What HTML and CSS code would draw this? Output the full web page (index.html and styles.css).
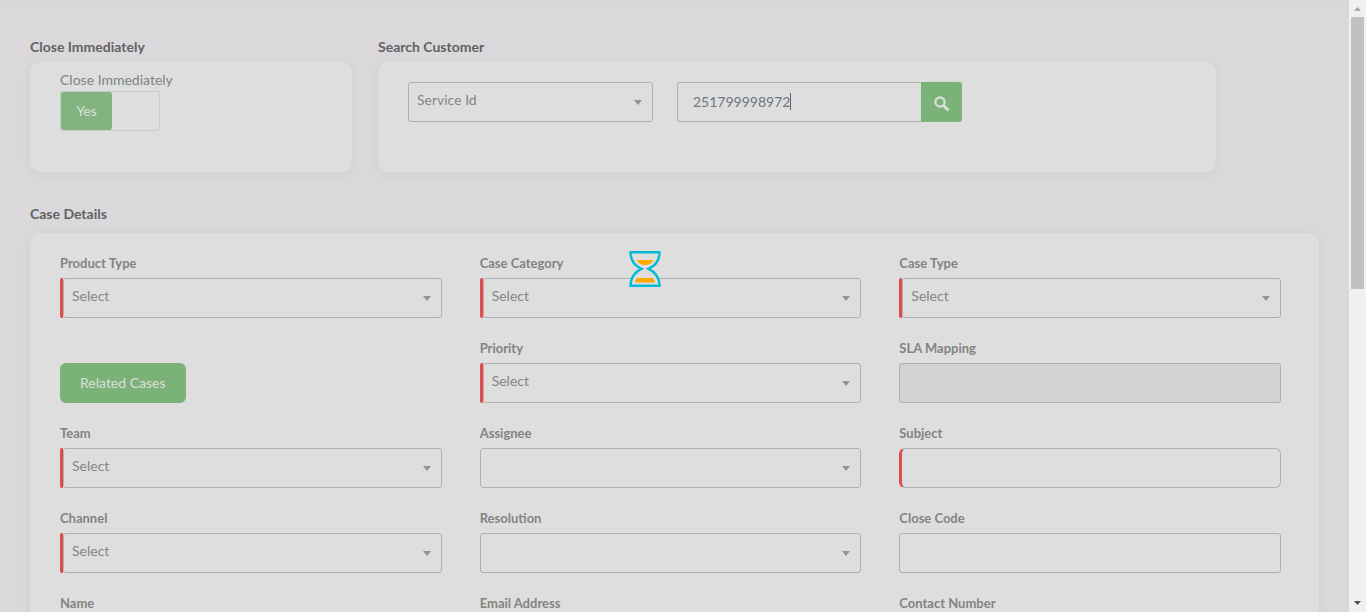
FILE: index.html
```html
<!DOCTYPE html>
<html lang="en">
<head>
<meta charset="utf-8">
<title>Case Details</title>
<link rel="stylesheet" href="styles.css">
</head>
<body>
<div class="shell">
  <main class="page">
    <form class="content">
      <div class="top">
        <section class="block">
          <h2 class="heading">Close Immediately</h2>
          <div class="card card-toggle">
            <span class="toggle-label" id="close-label">Close Immediately</span>
            <button type="button" class="toggle" role="switch" aria-checked="true" aria-labelledby="close-label"><span class="toggle-on">Yes</span></button>
          </div>
        </section>
        <section class="block">
          <h2 class="heading">Search Customer</h2>
          <div class="card card-search">
            <div class="picker">
              <select class="control" aria-label="Search by"><option>Service Id</option></select>
            </div>
            <div class="search">
              <input class="control search-input" type="text" value="251799998972" aria-label="Service Id">
              <span class="caret"></span>
              <button type="button" class="search-button" aria-label="Search">
                <svg width="16" height="16" viewBox="0 0 16 16" fill="none" stroke="currentColor"><circle cx="6" cy="6" r="4.6" stroke-width="2.2"/><path d="M9.500 9.500 14.500 14.500" stroke-width="2.800"/></svg>
              </button>
            </div>
          </div>
        </section>
      </div>
      <section class="block block-details">
        <h2 class="heading">Case Details</h2>
        <div class="card card-details">
          <div class="field"><label for="product">Product Type</label><div class="picker required"><select id="product" class="control"><option>Select</option></select></div></div>
          <div class="field"><label for="category">Case Category</label><div class="picker required"><select id="category" class="control"><option>Select</option></select></div></div>
          <div class="field"><label for="type">Case Type</label><div class="picker required"><select id="type" class="control"><option>Select</option></select></div></div>

          <div class="field field-action"><button type="button" class="related">Related Cases</button></div>
          <div class="field"><label for="priority">Priority</label><div class="picker required"><select id="priority" class="control"><option>Select</option></select></div></div>
          <div class="field"><label for="sla">SLA Mapping</label><input id="sla" class="control" type="text" disabled></div>

          <div class="field"><label for="team">Team</label><div class="picker required"><select id="team" class="control"><option>Select</option></select></div></div>
          <div class="field"><label for="assignee">Assignee</label><div class="picker"><select id="assignee" class="control"><option></option></select></div></div>
          <div class="field"><label for="subject">Subject</label><input id="subject" class="control input-required" type="text"></div>

          <div class="field"><label for="channel">Channel</label><div class="picker required"><select id="channel" class="control"><option>Select</option></select></div></div>
          <div class="field"><label for="resolution">Resolution</label><div class="picker"><select id="resolution" class="control"><option></option></select></div></div>
          <div class="field"><label for="code">Close Code</label><input id="code" class="control" type="text"></div>

          <div class="field"><label for="name">Name</label><input id="name" class="control" type="text"></div>
          <div class="field"><label for="email">Email Address</label><input id="email" class="control" type="text"></div>
          <div class="field"><label for="contact">Contact Number</label><input id="contact" class="control" type="text"></div>
        </div>
      </section>
    </form>
    <svg class="loader" width="32" height="36" viewBox="0 0 32 36" role="img" aria-label="Loading">
      <path d="M1.500 1.200H30.500C30.500 9 26 15 19.500 17.800 26 20.500 30.500 27 30.500 34.800H1.500C1.500 27 6 20.500 12.500 17.800 6 15 1.500 9 1.500 1.200Z" fill="#dedede" stroke="#04bbd8" stroke-width="2.400"/>
      <path d="M7.500 9H24.500C23 12 20 14 16 14S9 12 7.500 9ZM8 27H24C25 28.500 25.800 30 26 31.500H6C6.200 30 7 28.500 8 27Z" fill="#ffa800"/>
    </svg>
  </main>
  <div class="scrollbar" aria-hidden="true">
    <svg width="17" height="17" viewBox="0 0 17 17"><path d="M5 11 8.500 7 12 11Z" fill="#a3a3a3"/></svg>
    <div class="track"><div class="thumb"></div></div>
    <svg width="17" height="17" viewBox="0 0 17 17"><path d="M5 6 8.500 10 12 6Z" fill="#505050"/></svg>
  </div>
</div>
</body>
</html>
```
FILE: styles.css
```css
* { box-sizing: border-box; }
body {
  margin: 0;
  font-family: Lato, "Liberation Sans", sans-serif;
  font-size: 14px;
  line-height: 20px;
  color: #7f7f7f;
  background: #dad8db;
}
input, select, button { font: inherit; }
.shell { display: flex; height: 100vh; overflow: hidden; }
.page {
  position: relative;
  flex: 1;
  min-width: 0;
  overflow: hidden;
  border-top: 5px solid #d9d7d6;
}
.content { padding: 32px 30px; }
.top {
  display: grid;
  grid-template-columns: 322fr 838fr 77fr;
  gap: 26px;
}
.block { display: flex; flex-direction: column; gap: 5px; }
.block-details { margin-top: 32px; gap: 9px; }
.heading { margin: 0; font-size: 14px; font-weight: 700; color: #626262; }
.card {
  background: #dedede;
  border-radius: 10px;
  box-shadow: 0 2px 10px rgba(80, 70, 85, 0.06);
}
.card-toggle {
  display: flex;
  flex-direction: column;
  align-items: flex-start;
  gap: 1px;
  min-height: 110px;
  padding: 8px 30px;
}
.toggle-label { color: #7c8388; }
.toggle {
  display: flex;
  width: 100px;
  height: 40px;
  padding: 0;
  border: 1px solid #cacaca;
  border-radius: 2px;
  background: transparent;
}
.toggle-on {
  width: 51px;
  line-height: 38px;
  text-align: center;
  color: #dedede;
  background: #81b47e;
  border-radius: 3px;
}
.card-search {
  display: grid;
  grid-template-columns: 245fr 285fr 200fr;
  align-items: start;
  gap: 24px;
  min-height: 110px;
  padding: 20px 30px;
}
.control {
  display: block;
  width: 100%;
  height: 40px;
  padding: 0 15px 2px;
  border: 1px solid #b0b0b0;
  border-radius: 3px;
  background: transparent;
  color: #6f7680;
  outline: 0;
}
.control:disabled { background: #d2d2d2; }
.picker { position: relative; }
.picker .control {
  appearance: none;
  padding: 0 30px 4px 8px;
  color: #858585;
}
.picker::after {
  content: "";
  position: absolute;
  right: 11px;
  top: 18px;
  border: 4px solid transparent;
  border-top: 5px solid #949494;
  border-bottom: 0;
  pointer-events: none;
}
.required { border-left: 3px solid #e24b4b; border-radius: 2px; }
.input-required { border-left: 3px solid #e24b4b; border-radius: 6px; }
.search { position: relative; display: flex; }
.search-input { flex: 1; min-width: 0; border-right: 0; border-radius: 3px 0 0 3px; }
.caret {
  position: absolute;
  left: 113px;
  top: 11px;
  width: 1px;
  height: 17px;
  background: #5b6470;
}
.search-button {
  display: grid;
  place-items: center;
  width: 41px;
  height: 40px;
  padding: 4px 0 0;
  border: 0;
  border-radius: 0 3px 3px 0;
  background: #7bb277;
  color: #dedede;
}
.card-details {
  display: grid;
  grid-template-columns: repeat(3, minmax(0, 1fr));
  gap: 20px 38px;
  padding: 20px 38px 20px 30px;
}
.field { display: flex; flex-direction: column; gap: 5px; }
.field label { font-size: 13px; font-weight: 700; color: #838383; }
.field-action { align-items: flex-start; justify-content: flex-end; }
.related {
  height: 40px;
  padding: 0 20px;
  border: 0;
  border-radius: 6px;
  background: #7bb277;
  color: #dedede;
}
.loader { position: absolute; left: calc(50% - 46px); top: 246px; }
.scrollbar {
  display: flex;
  flex-direction: column;
  flex: 0 0 17px;
  background: #f0f0f0;
}
.scrollbar svg { display: block; }
.track { flex: 1; padding: 0 2px; }
.thumb { height: 47%; background: #c1c1c1; }
```
